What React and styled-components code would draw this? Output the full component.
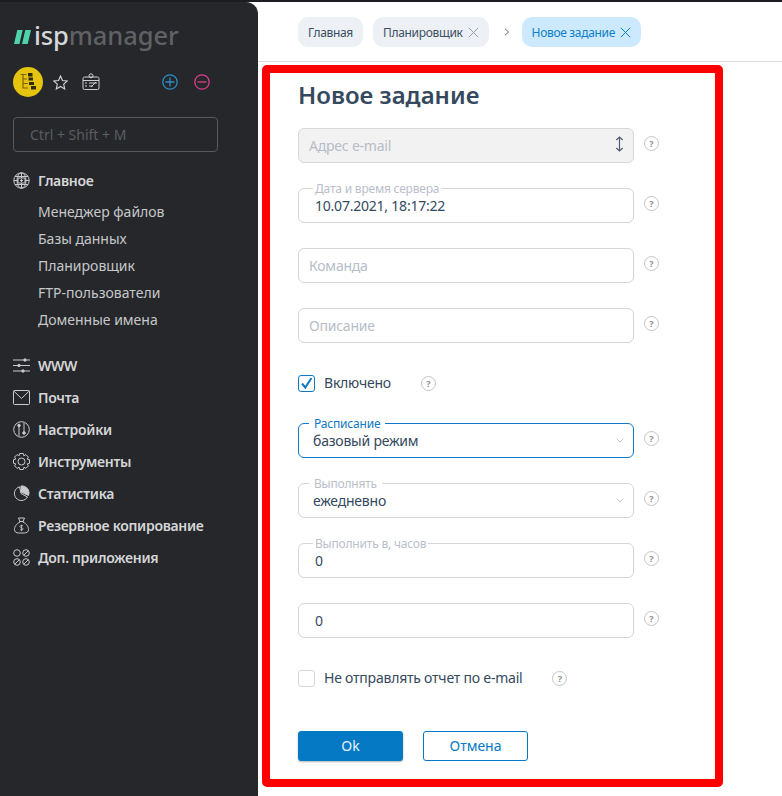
import React from "react";
import styled, { createGlobalStyle } from "styled-components";

const Global = createGlobalStyle`
  html, body { margin: 0; padding: 0; height: 100%; background: #fff; overflow: hidden; }
  body { font-family: "Noto Sans", "Open Sans", sans-serif; }
  #root { height: 100%; }
`;

const Page = styled.div`
  width: 782px; height: 796px; display: flex; flex-direction: column; overflow: hidden;
  border-top: 2px solid #1c1d20; box-sizing: border-box;
`;
const Body = styled.div`display: flex; flex: 1; min-height: 0;`;

const Sidebar = styled.aside`
  width: 258px; flex: none; background: #25272b; border-top-right-radius: 12px;
  padding: 21px 0 0 13px; box-sizing: border-box; color: #d9dadb;
`;
const Logo = styled.div`display: flex; align-items: center; gap: 3px; height: 28px; margin-left: 1px;`;
const LogoText = styled.div`
  font-family: "Noto Sans", sans-serif; font-size: 25.5px; line-height: 28px; font-weight: 500;
  letter-spacing: -0.1px; color: #5f6164; margin-top: -4px;
`;
const LogoAccent = styled.span`color: #d6d7d8;`;
const Tools = styled.div`display: flex; align-items: center; height: 30px; margin-top: 16px;`;
const HubBadge = styled.div`
  width: 30px; height: 30px; border-radius: 50%; background: #e6c30c; display: flex;
  align-items: center; justify-content: center; flex: none;
`;
const ToolIcon = styled.div`
  display: flex; margin-left: ${p => p.$gap}px;
`;
const Search = styled.div`
  width: 205px; height: 35px; margin-top: 20px; box-sizing: border-box; border: 1px solid #57595d;
  border-radius: 4px; padding-left: 16px; display: flex; align-items: center;
  color: #5b5d61; font-size: 14px;
`;
const NavMain = styled.div`
  display: flex; align-items: center; gap: 8px; height: 32px; font-size: 14px; font-weight: 600;
  letter-spacing: -0.3px; color: #d5d6d7; margin-top: ${p => p.$top || 0}px;
`;
const IconSlot = styled.span`width: 17px; height: 17px; flex: none; display: flex;`;
const NavSub = styled.div`
  height: 27px; line-height: 27px; font-size: 14px; color: #c6c7c9; padding-left: 25px;
`;
const SubList = styled.div`margin: 2px 0 16px;`;

const Main = styled.main`flex: 1; min-width: 0; display: flex; flex-direction: column;`;
const Header = styled.header`
  height: 60px; box-sizing: border-box; border-bottom: 1px solid #dcdcdc; padding: 15px 0 0 40px;
  display: flex; align-items: flex-start; flex: none;
`;
const Tab = styled.div`
  height: 30px; box-sizing: border-box; border-radius: 10px; display: flex; align-items: center; gap: 5px;
  padding: 0 10px; font-size: 12px; letter-spacing: -0.32px; margin-right: 10px;
  background: ${p => (p.$active ? "#cde9fd" : "#edf1f5")};
  color: ${p => (p.$active ? "#0d7fc6" : "#3c4f63")};
`;
const Chevron = styled.div`
  width: 16px; display: flex; justify-content: center; margin-right: 7px; height: 30px; align-items: center;
`;
const Frame = styled.section`
  width: 461px; height: 722px; margin: 3px 0 0 4px; box-sizing: border-box; border: 8px solid #ff0000;
  border-radius: 5px; padding: 0 0 0 28px; flex: none; letter-spacing: -0.22px;
`;
const Title = styled.h1`
  margin: 0; font-size: 24px; line-height: 32px; font-weight: 600; color: #34495e; padding-top: 6px; height: 55px;
  box-sizing: border-box; letter-spacing: 0;
`;
const Row = styled.div`
  display: flex; align-items: flex-start; margin-top: ${p => p.$top}px; height: 35px;
`;
const Box = styled.div`
  position: relative; width: 336px; height: 35px; box-sizing: border-box; border-radius: 6px;
  border: 1px solid ${p => (p.$focus ? "#0f78c2" : p.$dis ? "#d8d8d8" : "#d6d6d6")};
  background: ${p => (p.$dis ? "#f2f2f2" : "#fff")};
  display: flex; align-items: center; font-size: 14px; color: #34495e;
  padding-left: ${p => p.$pad}px; padding-bottom: 1px;
`;
const Placeholder = styled.span`color: #b6bdc7;`;
const Floating = styled.span`
  position: absolute; left: ${p => p.$left}px; top: -7px; padding: 0 ${p => p.$px}px; background: #fff;
  font-size: 12px; line-height: 14px; letter-spacing: -0.2px; color: ${p => (p.$focus ? "#0f78c2" : "#b9c0ca")};
`;
const SideIcon = styled.span`position: absolute; right: ${p => p.$r}px; top: ${p => p.$t}px; display: flex;`;
const Help = styled.span`
  width: 15px; height: 15px; flex: none; box-sizing: border-box; border: 1.5px solid #c4c4c4; border-radius: 50%;
  display: flex; align-items: center; justify-content: center; color: #8f8f8f; font-size: 9px; font-weight: 700; line-height: 1;
  letter-spacing: 0; margin-left: ${p => p.$left ?? 10}px; margin-top: ${p => p.$top ?? 8}px;
`;
const CheckRow = styled.div`
  display: flex; align-items: center; height: 17px; margin-top: ${p => p.$top}px; font-size: 14px; color: #34495e;
`;
const CheckLabel = styled.span`margin-top: -3px; line-height: 17px;`;
const CheckBox = styled.span`
  width: 17px; height: 17px; box-sizing: border-box; border-radius: 3px; flex: none;
  border: 1px solid ${p => (p.$on ? "#0f78c2" : "#d6d6d6")}; display: flex; align-items: center; justify-content: center;
  margin-right: 9px;
`;
const Buttons = styled.div`display: flex; gap: 20px; margin-top: 44px;`;
const Button = styled.button`
  width: 105px; height: 30px; box-sizing: border-box; border-radius: 3px; font-family: inherit; font-size: 14px; padding: 0 0 2px;
  border: 1px solid #0579c3; cursor: pointer;
  background: ${p => (p.$primary ? "#0579c3" : "#fff")};
  color: ${p => (p.$primary ? "#e8f3fa" : "#0579c3")};
  box-shadow: ${p => (p.$primary ? "0 1px 2px rgba(0,0,0,.3)" : "none")};
`;

const S = { fill: "none", stroke: "#c9cacb", strokeWidth: 1 };

const gearPath = (() => {
  const pts = [];
  const teeth = 8;
  for (let i = 0; i < teeth; i++) {
    const a = (i / teeth) * Math.PI * 2;
    const step = (Math.PI * 2) / teeth;
    [[6.2, -0.5], [8.2, -0.28], [8.2, 0.0 + 0.28], [6.2, 0.5]].forEach(([r, f]) => {
      const t = a + f * step;
      pts.push(`${(8.5 + r * Math.cos(t)).toFixed(2)} ${(8.5 + r * Math.sin(t)).toFixed(2)}`);
    });
  }
  return `M${pts.join("L")}Z`;
})();

const LogoMark = () => (
  <svg width="17" height="14" viewBox="0 0 17 14"><path d="M3.300 0h5.400L5.400 14H0zM11.300 0H17l-3.300 14H8z" fill="#4fd3a8" /></svg>
);
const HubIcon = () => (
  <svg width="17" height="18" viewBox="0 0 17 18">
    <path d="M0.500 1.500h6M3 1.500v13.500h5M3 6h4M3 10.500h5" fill="none" stroke="#7a6610" strokeWidth="1.200" />
    <path d="M8 0h4.500v3.500H8zM8.500 4.500H13v3H8.500zM9 9h5v3H9zM11 13h5v3.500h-5z" fill="#2f2c12" />
  </svg>
);
const StarIcon = () => (
  <svg width="15" height="15" viewBox="0 0 15 15"><path d="M7.500 1l2 4.500 4.800.5-3.600 3.200 1 4.800-4.200-2.500-4.200 2.500 1-4.800L.7 6l4.800-.5z" fill="none" stroke="#d4d5d6" strokeWidth="1.100" /></svg>
);
const CardIcon = () => (
  <svg width="18" height="18" viewBox="0 0 18 18" fill="none" stroke="#cfd0d1" strokeWidth="1">
    <rect x="1" y="4" width="16" height="12.500" rx="1.500" />
    <circle cx="9" cy="2.800" r="2" />
    <path d="M1 7.500h16M3 10h2M3 13h2M7 10h8M7 13h4M9 14l5-5" />
  </svg>
);
const RoundSign = ({ color, plus }) => (
  <svg width="16" height="16" viewBox="0 0 16 16" fill="none" stroke={color} strokeWidth="1.300">
    <circle cx="8" cy="8" r="7.200" />
    <path d={plus ? "M3.500 8h9M8 3.500v9" : "M3.500 8h9"} />
  </svg>
);
const GlobeIcon = () => (
  <svg width="17" height="17" viewBox="0 0 17 17" {...S}>
    <circle cx="8.500" cy="8.500" r="7.700" />
    <path d="M2 4.500h13M1 8.500h15M2 12.500h13M8.500 1v15" />
    <ellipse cx="8.500" cy="8.500" rx="4.500" ry="7.700" />
    <rect x="5" y="6" width="7" height="5" fill="#25272b" />
    <path d="M7 8.500h3M8.500 7v3" />
  </svg>
);
const SlidersIcon = () => (
  <svg width="17" height="17" viewBox="0 0 17 17" {...S}>
    <path d="M0 3h17M0 8.500h17M0 14h17" />
    <circle cx="12" cy="3" r="1.200" fill="#c9cacb" /><circle cx="6" cy="8.500" r="1.200" fill="#c9cacb" /><circle cx="10" cy="14" r="1.200" fill="#c9cacb" />
  </svg>
);
const MailIcon = () => (
  <svg width="17" height="17" viewBox="0 0 17 17" {...S}>
    <rect x="0.500" y="1.500" width="16" height="14" rx="1" /><path d="M0.800 2l7.700 7.500L16.200 2" />
  </svg>
);
const ToggleIcon = () => (
  <svg width="17" height="17" viewBox="0 0 17 17" {...S}>
    <circle cx="8.500" cy="8.500" r="7.800" />
    <path d="M6 15V5M11 2v10" />
    <circle cx="6" cy="4.500" r="1.300" fill="#c9cacb" /><circle cx="11" cy="12" r="1.300" fill="#c9cacb" />
  </svg>
);
const GearIcon = () => (
  <svg width="17" height="17" viewBox="0 0 17 17" {...S} strokeLinejoin="round">
    <path d={gearPath} />
    <circle cx="8.500" cy="8.500" r="3.500" />
  </svg>
);
const PieIcon = () => (
  <svg width="17" height="17" viewBox="0 0 17 17" {...S}>
    <path d="M6.500 1.800a7 7 0 1 0 8 10.200L8 8.500z" />
    <path d="M8 1a7 7 0 0 1 7.500 9.500L8 7z" fill="#c9cacb" />
  </svg>
);
const BagIcon = () => (
  <svg width="17" height="17" viewBox="0 0 17 17" {...S}>
    <path d="M5.500 1h6l-1.500 3.500h-3zM6.500 4.500h4M7 5C3 7 1.500 10 1.500 12.500 1.500 15 3.500 16 5.500 16h6c2 0 4-1 4-3.500C15.500 10 14 7 10 5" />
    <path d="M10 9c-.5-.8-3-.8-3 .6s3 .8 3 2.300-2.500 1.300-3 .4M8.500 7.800v6.400" strokeWidth="0.800" />
  </svg>
);
const AppsIcon = () => (
  <svg width="17" height="17" viewBox="0 0 17 17" {...S}>
    <circle cx="4" cy="4" r="3.300" /><circle cx="13" cy="4" r="3.300" /><circle cx="4" cy="13" r="3.300" /><circle cx="13" cy="13" r="3.300" />
    <path d="M11 6l4-4M2 15l4-4M11 15l4-4" />
  </svg>
);
const CloseX = ({ color }) => (
  <svg width="11" height="11" viewBox="0 0 11 11"><path d="M.8.8l9.400 9.400M10.200.8L.8 10.200" stroke={color} strokeWidth="1" fill="none" /></svg>
);
const Caret = () => (
  <svg width="8" height="5" viewBox="0 0 8 5"><path d="M.7.700L4 4l3.300-3.300" fill="none" stroke="#c4c9cf" strokeWidth="1" /></svg>
);
const UpDown = () => (
  <svg width="9" height="16" viewBox="0 0 9 16"><path d="M4.500 1v14M1.300 4l3.200-3 3.200 3M1.300 12l3.200 3 3.200-3" fill="none" stroke="#4d5f70" strokeWidth="1.200" /></svg>
);
const Tick = () => (
  <svg width="13" height="13" viewBox="0 0 13 13"><path d="M2 6.500l3.300 4L11.500 1" fill="none" stroke="#0f78c2" strokeWidth="2" /></svg>
);

const subItems = ["Менеджер файлов", "Базы данных", "Планировщик", "FTP-пользователи", "Доменные имена"];
const navItems = [
  ["WWW", SlidersIcon], ["Почта", MailIcon], ["Настройки", ToggleIcon], ["Инструменты", GearIcon],
  ["Статистика", PieIcon], ["Резервное копирование", BagIcon], ["Доп. приложения", AppsIcon],
];

export default function App() {
  return (
    <Page>
      <Global />
      <Body>
        <Sidebar>
          <Logo><LogoMark /><LogoText><LogoAccent>isp</LogoAccent>manager</LogoText></Logo>
          <Tools>
            <HubBadge><HubIcon /></HubBadge>
            <ToolIcon $gap={10}><StarIcon /></ToolIcon>
            <ToolIcon $gap={14}><CardIcon /></ToolIcon>
            <ToolIcon $gap={62}><RoundSign color="#2f8cc9" plus /></ToolIcon>
            <ToolIcon $gap={16}><RoundSign color="#dc3d8f" /></ToolIcon>
          </Tools>
          <Search>Ctrl + Shift + M</Search>
          <NavMain $top={12}><IconSlot><GlobeIcon /></IconSlot>Главное</NavMain>
          <SubList>{subItems.map(s => <NavSub key={s}>{s}</NavSub>)}</SubList>
          {navItems.map(([t, I]) => <NavMain key={t}><IconSlot><I /></IconSlot>{t}</NavMain>)}
        </Sidebar>
        <Main>
          <Header>
            <Tab>Главная</Tab>
            <Tab>Планировщик<CloseX color="#9aa3ad" /></Tab>
            <Chevron><svg width="6" height="8" viewBox="0 0 6 8"><path d="M1 .8L4.500 4 1 7.200" fill="none" stroke="#5b6b7b" strokeWidth="1" /></svg></Chevron>
            <Tab $active>Новое задание<CloseX color="#0d7fc6" /></Tab>
          </Header>
          <Frame>
            <Title>Новое задание</Title>
            <Row $top={0}>
              <Box $dis $pad={10}><Placeholder>Адрес e-mail</Placeholder><SideIcon $r={9} $t={7}><UpDown /></SideIcon></Box>
              <Help>?</Help>
            </Row>
            <Row $top={25}>
              <Box $pad={16}><Floating $left={14} $px={2}>Дата и время сервера</Floating>10.07.2021, 18:17:22</Box>
              <Help>?</Help>
            </Row>
            <Row $top={25}>
              <Box $pad={10}><Placeholder>Команда</Placeholder></Box>
              <Help>?</Help>
            </Row>
            <Row $top={25}>
              <Box $pad={10}><Placeholder>Описание</Placeholder></Box>
              <Help>?</Help>
            </Row>
            <CheckRow $top={32}><CheckBox $on><Tick /></CheckBox><CheckLabel>Включено</CheckLabel><Help $left={30} $top={0}>?</Help></CheckRow>
            <Row $top={31}>
              <Box $focus $pad={14}><Floating $focus $left={10} $px={5}>Расписание</Floating>базовый режим<SideIcon $r={9} $t={14}><Caret /></SideIcon></Box>
              <Help>?</Help>
            </Row>
            <Row $top={25}>
              <Box $pad={14}><Floating $left={10} $px={5}>Выполнять</Floating>ежедневно<SideIcon $r={9} $t={14}><Caret /></SideIcon></Box>
              <Help>?</Help>
            </Row>
            <Row $top={25}>
              <Box $pad={16}><Floating $left={14} $px={2}>Выполнить в, часов</Floating>0</Box>
              <Help>?</Help>
            </Row>
            <Row $top={25}>
              <Box $pad={16}>0</Box>
              <Help>?</Help>
            </Row>
            <CheckRow $top={32}><CheckBox /><CheckLabel>Не отправлять отчет по e-mail</CheckLabel><Help $left={30} $top={0}>?</Help></CheckRow>
            <Buttons><Button $primary>Ok</Button><Button>Отмена</Button></Buttons>
          </Frame>
        </Main>
      </Body>
    </Page>
  );
}
